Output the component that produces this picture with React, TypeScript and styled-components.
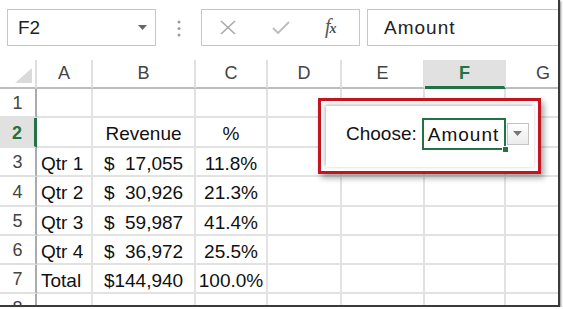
import React from "react";
import styled, { createGlobalStyle } from "styled-components";

const GlobalStyle = createGlobalStyle`
  html, body { margin: 0; padding: 0; background: #ffffff; }
  body { font-family: "Liberation Sans", Arial, sans-serif; }
  * { box-sizing: border-box; }
`;

const Frame = styled.div`
  position: relative;
  width: 560px;
  height: 307px;
  overflow: hidden;
  background: #ffffff;
  border-right: 2px solid #3a3a3a;
  border-bottom: 2px solid #3a3a3a;
  box-shadow: 1px 1px 2px rgba(0, 0, 0, 0.45);
`;

const FormulaBar = styled.div`
  display: flex;
  align-items: flex-start;
  height: 60px;
  padding: 9px 0 0 7px;
`;

const NameBox = styled.div`
  display: flex;
  align-items: center;
  justify-content: space-between;
  width: 149px;
  height: 37px;
  padding: 0 8px 0 10px;
  border: 1px solid #c6c6c6;
  font-size: 19px;
  color: #222;
`;

const DotsArea = styled.div`
  display: flex;
  justify-content: center;
  width: 45px;
  padding-top: 11px;
`;

const FxButtons = styled.div`
  display: flex;
  align-items: center;
  gap: 35px;
  width: 159px;
  height: 37px;
  padding-left: 17px;
  border: 1px solid #c6c6c6;
`;

const FxLabel = styled.span`
  font-family: "Liberation Serif", "Times New Roman", serif;
  font-style: italic;
  font-size: 20px;
  color: #555;
  letter-spacing: -1px;
  margin-top: -2px;
  small {
    font-size: 14px;
    font-weight: bold;
  }
`;

const FormulaInput = styled.div`
  flex: 1;
  display: flex;
  align-items: center;
  height: 37px;
  margin-left: 7px;
  padding-left: 16px;
  border: 1px solid #c6c6c6;
  border-right: none;
  font-size: 19px;
  letter-spacing: 1px;
  color: #222;
`;

const Sheet = styled.div`
  display: grid;
  grid-template-columns: 37px 56px 103px 72px 74px 83px 81px 76px;
  grid-template-rows: 29px 29px 30px 29px 30px 29px 29px 29px 29px;
`;

const Corner = styled.div`
  display: flex;
  justify-content: flex-end;
  align-items: flex-end;
  padding: 0 3px 4px 0;
  border-right: 2px solid #dedede;
  border-bottom: 2px solid #bdbdbd;
`;

const CornerTriangle = styled.div`
  width: 17px;
  height: 15px;
  background: #dadada;
  clip-path: polygon(100% 0, 100% 100%, 0 100%);
`;

const ColHeader = styled.div<{ $selected?: boolean }>`
  display: flex;
  align-items: center;
  justify-content: center;
  font-size: 18px;
  background: ${(p) => (p.$selected ? "#e1e1e1" : "#ffffff")};
  color: ${(p) => (p.$selected ? "#217346" : "#444")};
  font-weight: ${(p) => (p.$selected ? "bold" : "normal")};
  border-right: 2px solid #e0e0e0;
  border-bottom: ${(p) => (p.$selected ? "3px solid #217346" : "2px solid #bdbdbd")};
`;

const RowHeader = styled.div<{ $selected?: boolean }>`
  display: flex;
  align-items: center;
  justify-content: center;
  padding-top: 2px;
  font-size: 18px;
  background: ${(p) => (p.$selected ? "#e1e1e1" : "#ffffff")};
  color: ${(p) => (p.$selected ? "#217346" : "#444")};
  font-weight: ${(p) => (p.$selected ? "bold" : "normal")};
  border-right: ${(p) => (p.$selected ? "3px solid #217346" : "2px solid #ababab")};
  border-bottom: 2px solid #e0e0e0;
`;

const Cell = styled.div<{ $align: "left" | "center" }>`
  display: flex;
  align-items: center;
  justify-content: ${(p) => (p.$align === "left" ? "flex-start" : "center")};
  padding: 4px 0 0 ${(p) => (p.$align === "left" ? "4px" : "0")};
  font-size: 19px;
  color: #111;
  white-space: pre;
  overflow: hidden;
  border-right: 2px solid #e2e2e2;
  border-bottom: 2px solid #e2e2e2;
`;

const Callout = styled.div`
  position: absolute;
  left: 318px;
  top: 98px;
  width: 223px;
  height: 76px;
  display: flex;
  padding: 5px 4px 4px 5px;
  background: #ffffff;
  border: 3px solid #c3141f;
  box-shadow: 3px 4px 6px rgba(0, 0, 0, 0.35);
`;

const CalloutPanel = styled.div`
  flex: 1;
  display: flex;
  align-items: center;
  padding: 0 0 6px 20px;
  background: #ffffff;
  box-shadow: -1px -1px 4px rgba(0, 0, 0, 0.3);
`;

const ChooseLabel = styled.span`
  font-size: 19px;
  color: #111;
  margin-right: 5px;
`;

const SelectedCell = styled.div`
  position: relative;
  display: flex;
  align-items: center;
  width: 84px;
  height: 32px;
  padding: 3px 0 0 4px;
  border: 2px solid #217346;
  font-size: 19px;
  letter-spacing: 1px;
  color: #111;
`;

const FillHandle = styled.div`
  position: absolute;
  right: -5px;
  bottom: -5px;
  width: 7px;
  height: 7px;
  background: #217346;
  border: 1px solid #ffffff;
`;

const DropButton = styled.div`
  display: flex;
  align-items: center;
  justify-content: center;
  width: 22px;
  height: 22px;
  margin-left: 1px;
  border: 1px solid #c4c4c4;
  background: linear-gradient(#ffffff, #ebebeb);
`;

const Caret = ({ color = "#666" }: { color?: string }) => (
  <svg width="9" height="5" viewBox="0 0 9 5">
    <polygon points="0,0 9,0 4.5,5" fill={color} />
  </svg>
);

const columns = ["A", "B", "C", "D", "E", "F", "G"];

const rows: string[][] = [
  ["", "", "", "", "", "", ""],
  ["", "Revenue", "%", "", "", "", ""],
  ["Qtr 1", "$  17,055", "11.8%", "", "", "", ""],
  ["Qtr 2", "$  30,926", "21.3%", "", "", "", ""],
  ["Qtr 3", "$  59,987", "41.4%", "", "", "", ""],
  ["Qtr 4", "$  36,972", "25.5%", "", "", "", ""],
  ["Total", "$144,940", "100.0%", "", "", "", ""],
  ["", "", "", "", "", "", ""],
];

export default function App() {
  return (
    <>
      <GlobalStyle />
      <Frame>
        <FormulaBar>
          <NameBox>
            <span>F2</span>
            <Caret />
          </NameBox>
          <DotsArea>
            <svg width="4" height="17" viewBox="0 0 4 17">
              <circle cx="2" cy="2" r="1.5" fill="#9c9c9c" />
              <circle cx="2" cy="8.5" r="1.5" fill="#9c9c9c" />
              <circle cx="2" cy="15" r="1.5" fill="#9c9c9c" />
            </svg>
          </DotsArea>
          <FxButtons>
            <svg width="18" height="15" viewBox="0 0 18 15">
              <path d="M2 1 L16 14 M16 1 L2 14" stroke="#a9a9a9" strokeWidth="1.6" fill="none" />
            </svg>
            <svg width="18" height="13" viewBox="0 0 18 13">
              <path d="M1 7 L6 12 L17 1" stroke="#bfbfbf" strokeWidth="2" fill="none" />
            </svg>
            <FxLabel>
              f<small>x</small>
            </FxLabel>
          </FxButtons>
          <FormulaInput>Amount</FormulaInput>
        </FormulaBar>
        <Sheet>
          <Corner>
            <CornerTriangle />
          </Corner>
          {columns.map((c) => (
            <ColHeader key={c} $selected={c === "F"}>
              {c}
            </ColHeader>
          ))}
          {rows.map((row, ri) => (
            <React.Fragment key={ri}>
              <RowHeader $selected={ri === 1}>{ri + 1}</RowHeader>
              {row.map((v, ci) => (
                <Cell key={ci} $align={ci === 0 ? "left" : "center"}>
                  {v}
                </Cell>
              ))}
            </React.Fragment>
          ))}
        </Sheet>
        <Callout>
          <CalloutPanel>
            <ChooseLabel>Choose:</ChooseLabel>
            <SelectedCell>
              Amount
              <FillHandle />
            </SelectedCell>
            <DropButton>
              <Caret color="#777" />
            </DropButton>
          </CalloutPanel>
        </Callout>
      </Frame>
    </>
  );
}
